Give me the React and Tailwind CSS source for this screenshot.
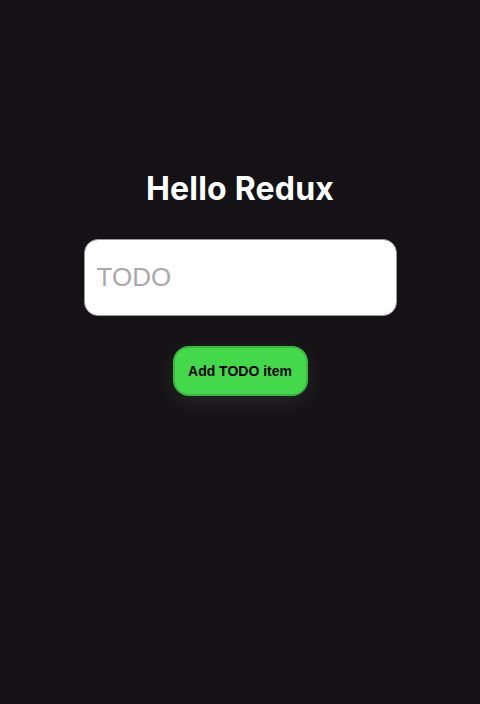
import React, { useState } from 'react';

const App = () => {
  const [todo, setTodo] = useState('');

  return (
    <div className="min-h-[704px] w-full bg-[#141215] flex flex-col items-center pt-[169px]">
      {/* Title */}
      <h1 className="text-[32px] leading-[40px] font-bold text-white font-['Inter',sans-serif] tracking-[0.2px]">
        Hello Redux
      </h1>

      {/* Input */}
      <input
        type="text"
        value={todo}
        onChange={(e) => setTodo(e.target.value)}
        placeholder="TODO"
        className="mt-[30px] w-[313px] h-[77px] rounded-[14px] bg-white border border-[#9a9a9a] px-3 text-[26px] text-black placeholder:text-[#a9a9a9] font-['Liberation_Sans',sans-serif] outline-none"
      />

      {/* Button */}
      <button
        type="button"
        className="mt-[30px] w-[135px] h-[50px] rounded-[16px] bg-[#44d94b] border-2 border-[#3bb842] text-[14px] font-bold text-black font-['Liberation_Sans',sans-serif] shadow-[0_6px_24px_rgba(255,255,255,0.09)]"
      >
        Add TODO item
      </button>
    </div>
  );
};

export default App;
